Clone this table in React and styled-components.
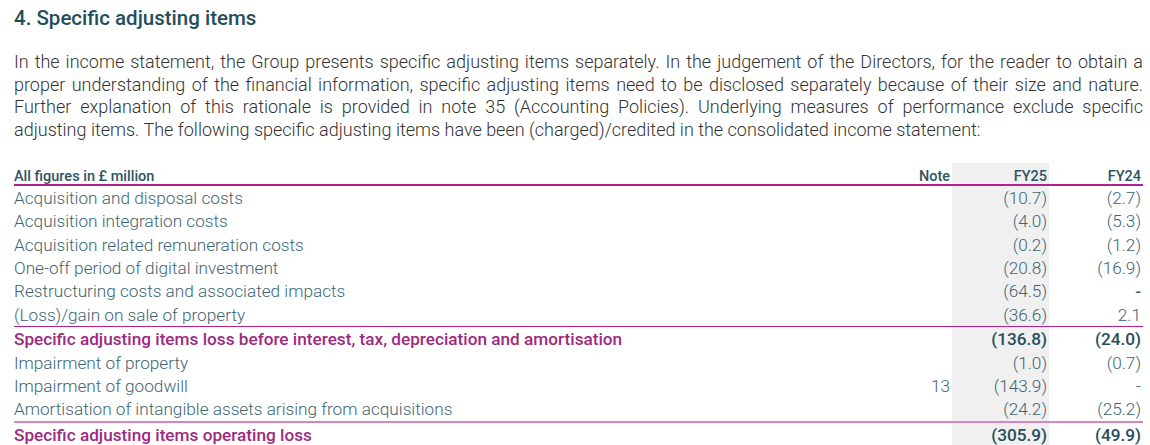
import styled, { createGlobalStyle } from "styled-components";

const GlobalStyle = createGlobalStyle`
  body {
    margin: 0;
    background: #fff;
    font-family: Roboto, "Liberation Sans", sans-serif;
  }
`;

const rows = [
  { label: "Acquisition and disposal costs", fy25: "(10.7)", fy24: "(2.7)" },
  { label: "Acquisition integration costs", fy25: "(4.0)", fy24: "(5.3)" },
  { label: "Acquisition related remuneration costs", fy25: "(0.2)", fy24: "(1.2)" },
  { label: "One-off period of digital investment", fy25: "(20.8)", fy24: "(16.9)" },
  { label: "Restructuring costs and associated impacts", fy25: "(64.5)", fy24: "-", dash: true },
  { label: "(Loss)/gain on sale of property", fy25: "(36.6)", fy24: "2.1" },
  {
    label: "Specific adjusting items loss before interest, tax, depreciation and amortisation",
    fy25: "(136.8)",
    fy24: "(24.0)",
    total: true,
  },
  { label: "Impairment of property", fy25: "(1.0)", fy24: "(0.7)" },
  { label: "Impairment of goodwill", note: "13", fy25: "(143.9)", fy24: "-" },
  { label: "Amortisation of intangible assets arising from acquisitions", fy25: "(24.2)", fy24: "(25.2)" },
  { label: "Specific adjusting items operating loss", fy25: "(305.9)", fy24: "(49.9)", total: true, last: true },
];

const App = () => {
  return (
    <Page>
      <GlobalStyle />
      <Title>4. Specific adjusting items</Title>
      <Intro>
        In the income statement, the Group presents specific adjusting items separately. In the judgement of the
        Directors, for the reader to obtain a proper understanding of the financial information, specific adjusting
        items need to be disclosed separately because of their size and nature. Further explanation of this rationale
        is provided in note 35 (Accounting Policies). Underlying measures of performance exclude specific adjusting
        items. The following specific adjusting items have been (charged)/credited in the consolidated income
        statement:
      </Intro>
      <Table>
        <colgroup>
          <col />
          <col style={{ width: 90 }} />
          <col style={{ width: 97 }} />
          <col style={{ width: 94 }} />
        </colgroup>
        <thead>
          <tr>
            <Head>All figures in £ million</Head>
            <Head $num>Note</Head>
            <Head $num $shade>FY25</Head>
            <Head $num>FY24</Head>
          </tr>
        </thead>
        <tbody>
          {rows.map(r => (
            <Row key={r.label} $total={r.total} $last={r.last}>
              <Label $total={r.total}>{r.label}</Label>
              <Num>{r.note}</Num>
              <Num $shade $total={r.total}>{r.fy25}</Num>
              <Num $total={r.total} $dash={r.dash}>{r.fy24}</Num>
            </Row>
          ))}
        </tbody>
      </Table>
    </Page>
  );
};
export default App;

const Page = styled.div`
  padding: 6px 7px 0 14px;
  width: 1129px;
`;

const Title = styled.h2`
  margin: 0;
  font-size: 20.5px;
  font-weight: 500;
  line-height: 24px;
  color: #1f4e5c;
`;

const Intro = styled.p`
  margin: 21px 0 21px;
  font-size: 18px;
  font-weight: 300;
  line-height: 22.7px;
  color: #333;
  text-align: justify;
  letter-spacing: 0;
`;

const Table = styled.table`
  width: 100%;
  border-collapse: collapse;
  table-layout: fixed;
`;

const Head = styled.th`
  padding: 6px 2px 0 0;
  height: 15px;
  font-size: 14.5px;
  font-weight: 500;
  line-height: 15px;
  color: #2d5563;
  text-align: ${p => (p.$num ? "right" : "left")};
  background: ${p => (p.$shade ? "#f0f0f0" : "transparent")};
  border-bottom: 2px solid #b5208f;
`;

const Row = styled.tr`
  td {
    border-top: ${p => (p.$last ? "2px solid #d885be" : p.$total ? "1px solid #b5208f" : "none")};
  }
`;

const Label = styled.td`
  padding: 1px 0 0;
  height: 22.4px;
  font-size: 17.2px;
  line-height: 22.4px;
  font-weight: ${p => (p.$total ? 500 : 300)};
  color: ${p => (p.$total ? "#9c2a80" : "#3d6572")};
  white-space: nowrap;
`;

const Num = styled.td`
  padding: 1px 2px 0 0;
  height: 22.4px;
  font-size: 17.2px;
  line-height: 22.4px;
  text-align: right;
  font-weight: ${p => (p.$total || p.$dash ? 500 : 300)};
  color: ${p => (p.$total ? "#274d5a" : "#3d6572")};
  background: ${p => (p.$shade ? "#f0f0f0" : "transparent")};
`;
